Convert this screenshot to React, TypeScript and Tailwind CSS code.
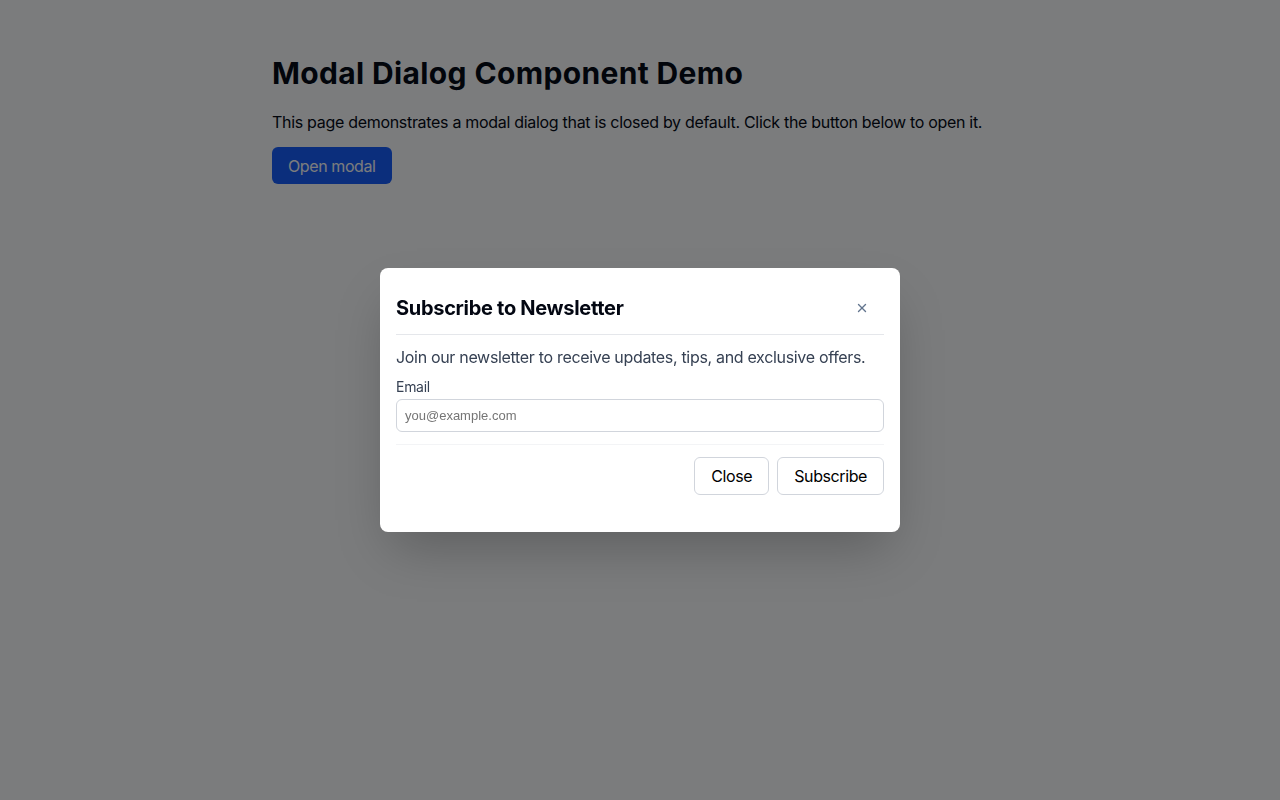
import { X } from "lucide-react";

export default function App() {
  return (
    <main
      className="relative min-h-screen bg-white text-gray-900"
      style={{ fontFamily: "Inter, 'Noto Sans', sans-serif" }}
    >
      <div className="mx-auto max-w-3xl px-4 pt-[55px]">
        <h1 className="text-3xl font-bold tracking-[0.012em] text-gray-950">
          Modal Dialog Component Demo
        </h1>
        <p className="mt-[19px] text-base tracking-[-0.019em] text-gray-950">
          This page demonstrates a modal dialog that is closed by default. Click the button below to open it.
        </p>
        <button className="mt-[13px] rounded-md bg-blue-600 px-4 py-[6.5px] text-base tracking-[-0.025em] text-white">
          Open modal
        </button>
      </div>

      {/* overlay */}
      <div className="fixed inset-0 flex items-center justify-center bg-[rgba(2,3,6,0.52)]">
        <div className="w-[520px] rounded-lg bg-white p-4 pb-[37px] shadow-2xl">
          <div className="flex items-center justify-between border-b border-gray-200 pb-3 pt-2.5">
            <h2 className="text-xl font-bold tracking-[-0.015em] text-gray-950">Subscribe to Newsletter</h2>
            <button className="mr-1.5 flex h-7 w-8 items-center justify-center text-slate-500">
              <X size={14} strokeWidth={2.4} />
            </button>
          </div>
          <p className="mt-2.5 text-base tracking-[-0.02em] text-gray-700">
            Join our newsletter to receive updates, tips, and exclusive offers.
          </p>
          <label className="mt-2 block text-sm tracking-[-0.02em] text-gray-700">Email</label>
          <input
            type="email"
            placeholder="you@example.com"
            className="mt-0.5 block h-[33px] w-full rounded-md border border-gray-300 px-2 text-[13px] placeholder:text-[#757575]"
            style={{ fontFamily: "'Liberation Sans', Arial, sans-serif" }}
          />
          <div className="mt-3 flex justify-end gap-2 border-t border-gray-100 pt-3">
            <button className="rounded-md border border-gray-300 bg-white px-4 py-[6px] text-base tracking-[-0.025em] text-black">
              Close
            </button>
            <button className="rounded-md border border-gray-300 bg-white px-4 py-[6px] text-base tracking-[-0.025em] text-black">
              Subscribe
            </button>
          </div>
        </div>
      </div>
    </main>
  );
}
